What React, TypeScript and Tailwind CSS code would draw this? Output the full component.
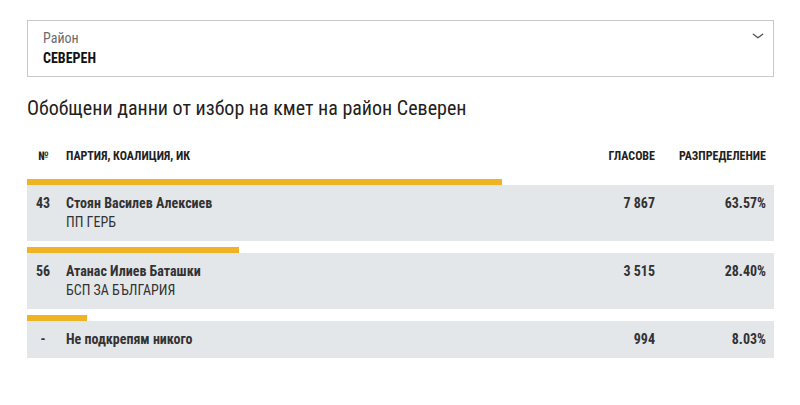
import React from 'react';

const rows = [
  { no: '43', name: 'Стоян Василев Алексиев', party: 'ПП ГЕРБ', votes: '7 867', pct: 63.57 },
  { no: '56', name: 'Атанас Илиев Баташки', party: 'БСП ЗА БЪЛГАРИЯ', votes: '3 515', pct: 28.4 },
  { no: '-', name: 'Не подкрепям никого', party: '', votes: '994', pct: 8.03 },
];

export default function App() {
  return (
    <div
      className="w-[800px] h-[405px] bg-white px-[27px] pt-[20px] text-[#333]"
      style={{ fontFamily: '"Roboto Condensed", "Liberation Sans Narrow", Roboto, sans-serif' }}
    >
      {/* District select */}
      <div className="relative h-[57px] w-[747px] border border-[#c9c9c9] pl-[15px] pt-[8px]">
        <div className="text-[14px] leading-[18px] text-[#6b6b6b]">Район</div>
        <div className="mt-[2px] text-[14px] font-bold leading-[18px] text-[#111]">СЕВЕРЕН</div>
        <svg className="absolute right-[8px] top-[8px] h-[14px] w-[14px] text-[#555]" viewBox="0 0 24 24" fill="none" stroke="currentColor" strokeWidth={2.4} strokeLinecap="round" strokeLinejoin="round">
          <path d="M4 9l8 6 8-6" />
        </svg>
      </div>

      <h2 className="mt-[18px] text-[20px] leading-[26px] text-[#222]">
        Обобщени данни от избор на кмет на район Северен
      </h2>

      {/* Table header */}
      <div className="mt-[27px] flex w-[747px] items-center text-[12px] font-bold leading-[16px] text-[#222]">
        <div className="w-[39px] pl-[11px]">№</div>
        <div className="flex-1">ПАРТИЯ, КОАЛИЦИЯ, ИК</div>
        <div className="w-[100px] text-right">ГЛАСОВЕ</div>
        <div className="w-[119px] pr-[8px] text-right">РАЗПРЕДЕЛЕНИЕ</div>
      </div>

      <div className="mt-[15px] flex w-[747px] flex-col gap-[6px]">
        {rows.map((r) => (
          <div key={r.name}>
            <div className="h-[6px] bg-[#f0b323]" style={{ width: `${r.pct}%` }} />
            <div className="flex bg-[#e4e7ea] py-[9px] text-[14px] leading-[19px]">
              <div className="w-[39px] pl-[9px] font-bold">
                <span className="inline-block min-w-[14px] text-center">{r.no}</span>
              </div>
              <div className="flex-1">
                <div className="font-bold">{r.name}</div>
                {r.party && <div className="text-[#333]">{r.party}</div>}
              </div>
              <div className="w-[100px] text-right font-bold">{r.votes}</div>
              <div className="w-[119px] pr-[8px] text-right font-bold">{r.pct.toFixed(2)}%</div>
            </div>
          </div>
        ))}
      </div>
    </div>
  );
}
